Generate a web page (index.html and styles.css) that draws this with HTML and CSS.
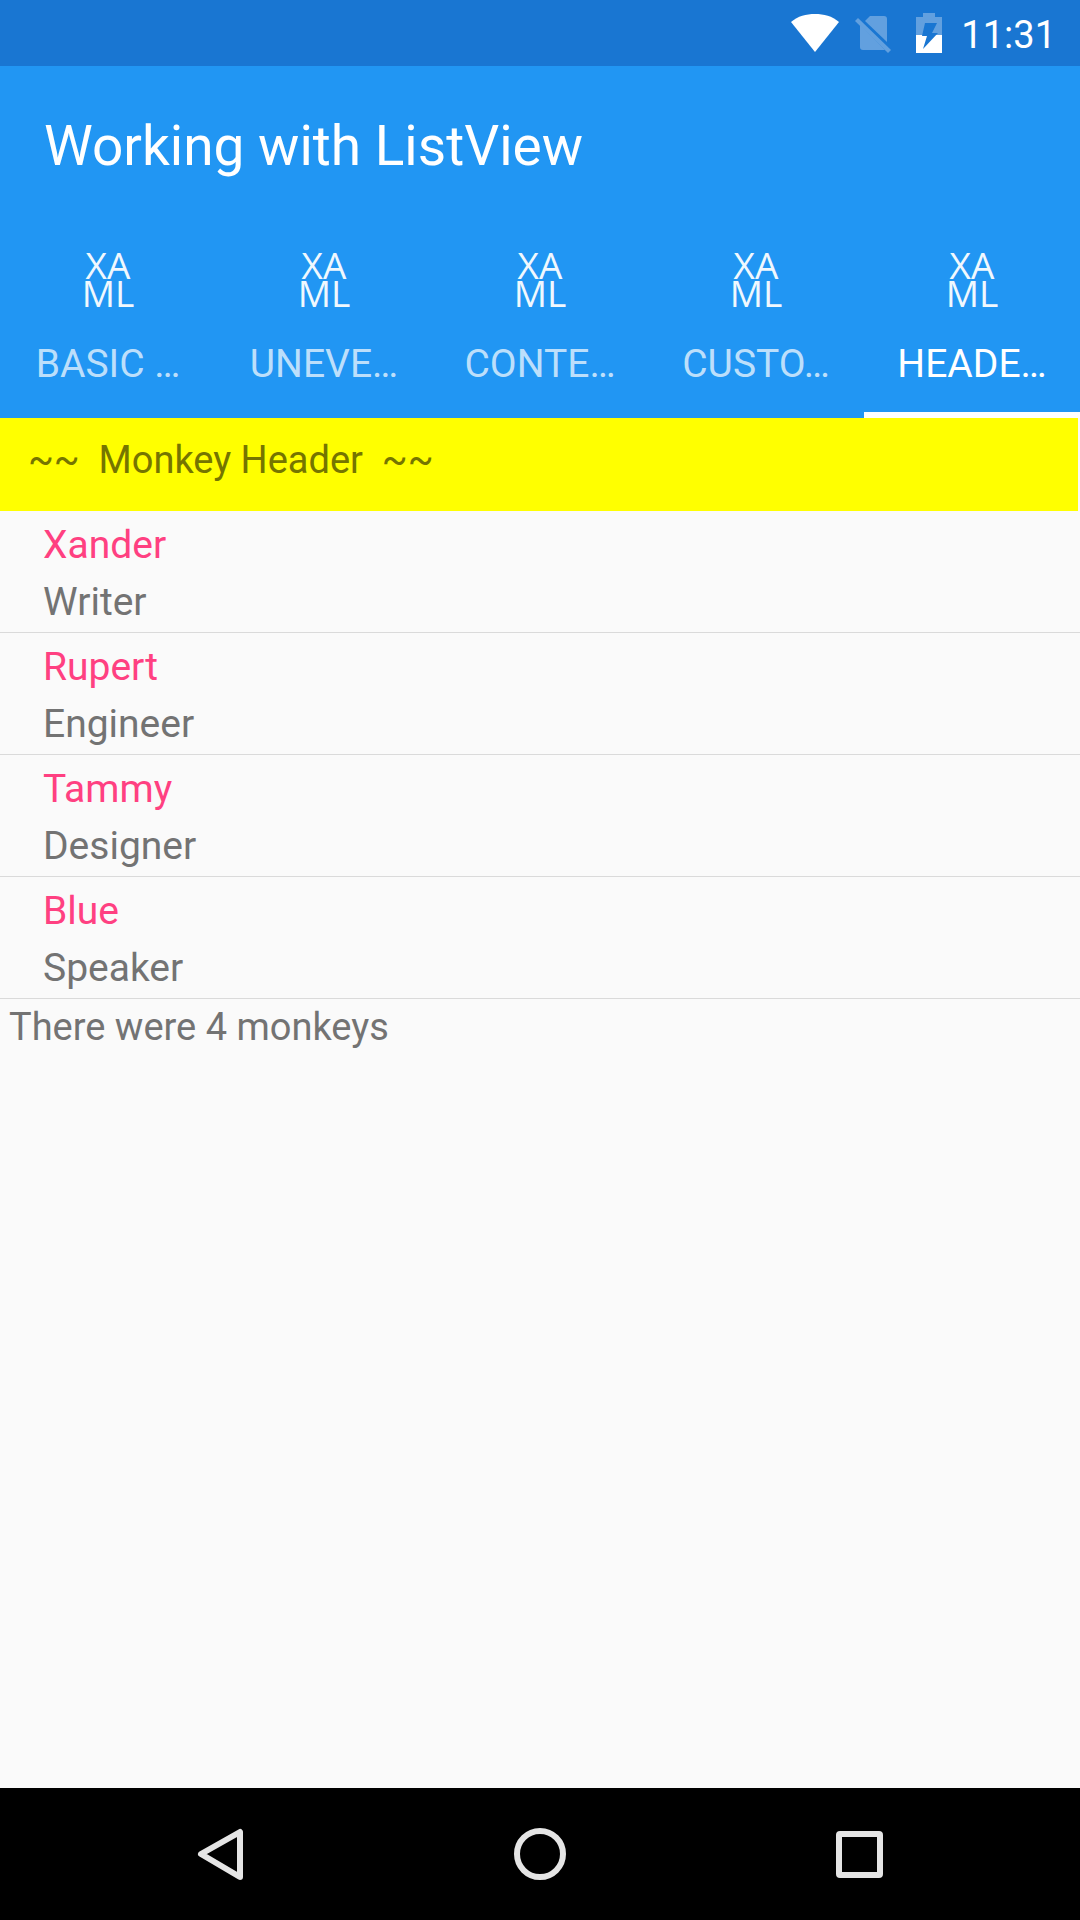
FILE: index.html
```html
<!DOCTYPE html>
<html lang="en">
<head>
<meta charset="utf-8">
<meta name="viewport" content="width=device-width, initial-scale=1">
<title>Working with ListView</title>
<link rel="stylesheet" href="styles.css">
</head>
<body>
<div class="screen">
  <div class="status-bar">
    <svg class="status-icon" width="48" height="40" viewBox="0 0 48 40" role="img" aria-label="Wi-Fi">
      <path fill="#fff" d="M0 9C7 3 15 1 24 1s17 2 24 8L24 39z"/>
    </svg>
    <svg class="status-icon" width="44" height="40" viewBox="0 0 44 40" role="img" aria-label="No SIM">
      <g fill="#62a0df">
        <path d="M10 8l5-5h14a3 3 0 0 1 3 3v23z"/>
        <path d="M5 12l25 25H8a3 3 0 0 1-3-3z"/>
        <path d="M3 5l33 32-3 3L0 8z"/>
      </g>
    </svg>
    <svg class="status-icon" width="28" height="40" viewBox="0 0 28 40" role="img" aria-label="Charging">
      <path fill="#62a0df" d="M8 0h12v4h7v18H1V4h7z"/>
      <path fill="#fff" d="M1 22h26v18H1z"/>
      <path fill="#1976d2" d="M10 10h12l-5 10h6L8 36l4-13H7z"/>
    </svg>
    <time class="clock">11:31</time>
  </div>

  <header class="app-bar">
    <h1 class="title">Working with ListView</h1>
    <nav class="tabs">
      <button class="tab" type="button"><span class="tab-icon">XA<br>ML</span><span class="tab-label">BASIC …</span></button>
      <button class="tab" type="button"><span class="tab-icon">XA<br>ML</span><span class="tab-label">UNEVE…</span></button>
      <button class="tab" type="button"><span class="tab-icon">XA<br>ML</span><span class="tab-label">CONTE…</span></button>
      <button class="tab" type="button"><span class="tab-icon">XA<br>ML</span><span class="tab-label">CUSTO…</span></button>
      <button class="tab tab-active" type="button" aria-current="page"><span class="tab-icon">XA<br>ML</span><span class="tab-label">HEADE…</span></button>
    </nav>
  </header>

  <main class="content">
    <h2 class="list-header">~~&nbsp; Monkey Header &nbsp;~~</h2>
    <ul class="list">
      <li class="row"><span class="name">Xander</span><span class="job">Writer</span></li>
      <li class="row"><span class="name">Rupert</span><span class="job">Engineer</span></li>
      <li class="row"><span class="name">Tammy</span><span class="job">Designer</span></li>
      <li class="row"><span class="name">Blue</span><span class="job">Speaker</span></li>
    </ul>
    <p class="list-footer">There were 4 monkeys</p>
  </main>

  <nav class="system-nav">
    <button class="nav-button" type="button" aria-label="Back">
      <svg width="56" height="56" viewBox="0 0 56 56"><path d="M9 28L48 6v45z"/></svg>
    </button>
    <button class="nav-button" type="button" aria-label="Home">
      <svg width="56" height="56" viewBox="0 0 56 56"><circle cx="28" cy="28" r="23"/></svg>
    </button>
    <button class="nav-button" type="button" aria-label="Recent apps">
      <svg width="56" height="56" viewBox="0 0 56 56"><rect x="7" y="8" width="41" height="41" rx="1"/></svg>
    </button>
  </nav>
</div>
</body>
</html>
```
FILE: styles.css
```css
* {
  box-sizing: border-box;
}

body {
  margin: 0;
  background: #fafafa;
  color: #737373;
  font-family: Roboto, "Liberation Sans", sans-serif;
  font-size: 39px;
  line-height: 57px;
}

button {
  padding: 0;
  border: 0;
  background: none;
  color: inherit;
  font: inherit;
}

.screen {
  display: flex;
  flex-direction: column;
  min-height: 100vh;
}

.status-bar {
  display: flex;
  align-items: center;
  justify-content: flex-end;
  gap: 16px;
  height: 66px;
  padding-right: 24px;
  background: #1976d2;
  color: #fff;
}

.status-icon {
  display: block;
}

.clock {
  padding: 4px 0 0 2px;
  font-size: 38px;
}

.app-bar {
  background: #2196f3;
  color: #fff;
}

.title {
  margin: 0;
  padding: 48px 44px;
  font-size: 55px;
  font-weight: 400;
  line-height: 64px;
}

.tabs {
  display: grid;
  grid-template-columns: repeat(5, 1fr);
}

.tab {
  display: flex;
  flex-direction: column;
  align-items: center;
  gap: 29px;
  padding: 25px 0 19px;
  border-bottom: 6px solid transparent;
}

.tab-active {
  border-bottom-color: #fff;
}

.tab-icon {
  color: #f0f8fe;
  font-family: "Open Sans", sans-serif;
  font-size: 37px;
  line-height: 28px;
}

.tab-label {
  color: #bcdffb;
}

.tab-active .tab-label {
  color: #fff;
}

.content {
  flex: 1;
}

.list-header {
  margin: 0 2px 0 0;
  padding: 14px 28px 22px;
  background: #ff0;
  color: #757500;
  font-size: 38px;
  font-weight: 400;
}

.list {
  margin: 0;
  padding: 0;
  list-style: none;
}

.row {
  display: flex;
  flex-direction: column;
  padding: 6px 43px 1px;
  border-bottom: 1px solid #dadada;
}

.name {
  color: #ff4081;
}

.list-footer {
  margin: 0;
  padding: 0 9px;
  font-size: 38px;
}

.system-nav {
  display: flex;
  height: 132px;
  padding: 0 60px;
  background: #000;
}

.nav-button {
  display: flex;
  flex: 1;
  align-items: center;
  justify-content: center;
}

.nav-button svg {
  fill: none;
  stroke: #e5e5e5;
  stroke-width: 6;
  stroke-linejoin: round;
}
```
